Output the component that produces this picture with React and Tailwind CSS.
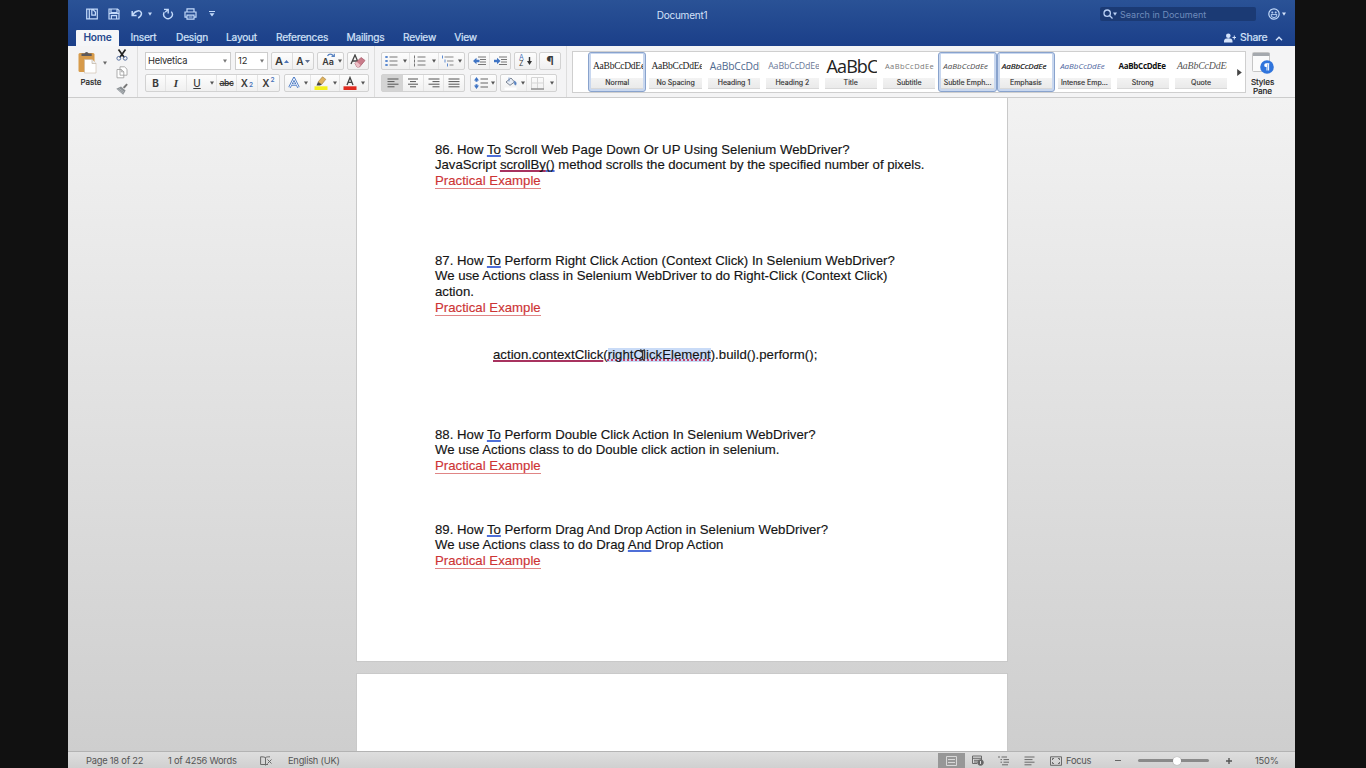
import React from "react";

function Caret({ className = "" }) {
  return (
    <svg viewBox="0 0 4 4" className={"h-1 w-1 shrink-0 " + className}>
      <path d="M0 .4h4L2 3.8z" fill="currentColor" />
    </svg>
  );
}

function Cell({ className = "", children }) {
  return <div className={"flex h-full shrink-0 items-center justify-center " + className}>{children}</div>;
}

function Group({ className = "", children }) {
  return (
    <div
      className={
        "flex h-[18px] shrink-0 items-center rounded-[2px] border border-[#d2d2d2] bg-linear-to-b from-[#fdfdfd] to-[#f0f0f0] text-[#3a3a3a] " +
        className
      }
    >
      {children}
    </div>
  );
}

const quickStroke = { fill: "none", stroke: "#c3dafa", strokeWidth: 1.2 };

function QuickBar() {
  return (
    <div className="flex h-full w-[156px] items-center text-[#c3dafa]">
      <Cell className="w-[23px]">
        <svg viewBox="0 0 12 12" className="h-3 w-3" {...quickStroke}>
          <path d="M.7 1.200h10.600v9.600H.7zM3.300 1.200v9.600M5.800 1.500v5.700h3.600V4L7.200 1.800z" />
        </svg>
      </Cell>
      <Cell className="w-[22px]">
        <svg viewBox="0 0 12 12" className="h-3 w-3" {...quickStroke}>
          <path d="M1 1h8.600L11 2.400V11H1zM3 1v3.600h6V1M3.400 11V7.600h5.200V11" />
          <path d="M1 5.500h10" />
        </svg>
      </Cell>
      <Cell className="w-[23px]">
        <svg viewBox="0 0 12 12" className="h-3 w-3" {...quickStroke} strokeWidth="1.500">
          <path d="M1.200 3v4.400h4.400M1.500 7C4.500 1.800 9.500 2 10.300 4.800 10.900 7 9.200 8.900 7.200 10" />
        </svg>
      </Cell>
      <Caret />
      <Cell className="ml-[6px] w-[20px]">
        <svg viewBox="0 0 12 12" className="h-3 w-3" {...quickStroke} strokeWidth="1.400">
          <path d="M2.300 4.200A4.300 4.300 0 1 0 9.300 3.600M2 1.400h4.200v4.200M6 1.500 3.200 4.200" />
        </svg>
      </Cell>
      <Cell className="w-[24px]">
        <svg viewBox="0 0 13 12" className="h-3 w-[13px]" {...quickStroke}>
          <path d="M3 4V.8h7V4M3 9.200H1V4h11v5.200h-2M3 7.200h7v4H3zM4.500 9h4" />
        </svg>
      </Cell>
      <Cell className="w-[19px]">
        <svg viewBox="0 0 6 6" className="h-[6px] w-[6px]" fill="#c3dafa">
          <path d="M0 0h6v1H0zM.5 2.300h5L3 5.500z" />
        </svg>
      </Cell>
    </div>
  );
}

function TitleBar() {
  return (
    <header className="flex h-[46px] shrink-0 flex-col bg-linear-to-b from-[#2a5296] to-[#1b3f89] text-[#d5e3fa]">
      <div className="flex h-[28px] items-center pl-[12px]">
        <QuickBar />
        <div className="ml-[419px] w-[54px] pt-[2px] text-center text-[10px] tracking-[-0.220px] whitespace-nowrap">Document1</div>
        <div className="ml-[391px] flex h-[14px] w-[156px] items-center rounded-[2px] bg-[#1b3a74] pl-[3px]">
          <svg viewBox="0 0 10 10" className="h-[10px] w-[10px]" fill="none" stroke="#b9d0f5" strokeWidth="1.300">
            <circle cx="4.200" cy="4.200" r="3.200" />
            <path d="m6.500 6.500 3 3" />
          </svg>
          <Caret className="text-[#b9d0f5]" />
          <span className="mt-px ml-[3px] text-[9px] leading-[13px] whitespace-nowrap text-[#6f8cbd]">Search in Document</span>
        </div>
        <svg viewBox="0 0 12 12" className="ml-[12px] h-3 w-3" {...quickStroke}>
          <circle cx="6" cy="6" r="5.200" />
          <circle cx="4.300" cy="4.600" r=".4" />
          <circle cx="7.700" cy="4.600" r=".4" />
          <path d="M3 6.600a3 3 0 0 0 6 0z" strokeWidth=".9" />
        </svg>
        <Caret className="ml-[2px]" />
      </div>
      <div className="h-[2px]" />
      <nav className="flex h-[16px] items-center pl-[8px] text-[10.200px] tracking-[-0.250px] whitespace-nowrap [-webkit-text-stroke:0.200px_currentColor]">
        <div className="flex h-full w-[43px] items-center justify-center rounded-t-[1px] bg-[#f5f6f8] font-semibold text-[#26488c] [-webkit-text-stroke:0px]">Home</div>
        <div className="w-[49px] text-center">Insert</div>
        <div className="w-[48px] text-center">Design</div>
        <div className="w-[51px] text-center">Layout</div>
        <div className="w-[70px] text-center">References</div>
        <div className="w-[57px] text-center">Mailings</div>
        <div className="w-[51px] text-center">Review</div>
        <div className="w-[41px] text-center">View</div>
        <svg viewBox="0 0 12 10" className="ml-[738px] h-[10px] w-3" fill="#d5e3fa">
          <circle cx="4.300" cy="2.700" r="2.300" />
          <path d="M0 9.500V8c0-2 2-2.700 4.300-2.700S8.500 6 8.500 8v1.500zM8.500 4h1.300V2.600h1V4H12v1h-1.200v1.500h-1V5H8.500z" />
        </svg>
        <span className="ml-[4px] w-[26px] text-[10.500px]">Share</span>
        <svg viewBox="0 0 8 5" className="ml-[9px] h-[5px] w-2" fill="none" stroke="#d5e3fa" strokeWidth="1.400">
          <path d="M1 4.300 4 1.300l3 3" />
        </svg>
      </nav>
    </header>
  );
}

function ClipboardGroup() {
  return (
    <div className="flex h-full w-[70px] shrink-0 border-r border-[#dedede]">
      <div className="flex w-[46px] flex-col items-center pt-[5px]">
        <div className="flex w-full items-center pl-[10px]">
          <svg viewBox="0 0 19 23" className="h-[23px] w-[19px]">
            <rect x=".5" y="2" width="16" height="19" rx="1.500" fill="#d79b4b" />
            <path d="M3.500 5V2.500h3a2.200 2.200 0 0 1 4.200 0h3V5z" fill="#5d5a5c" />
            <path d="M6.500 8.500h7.500l4 4V22H6.500z" fill="#fff" stroke="#c9b9a5" strokeWidth=".6" />
            <path d="M14 8.500v4h4" fill="#eee" stroke="#b6a999" strokeWidth=".6" />
          </svg>
          <Caret className="ml-[6px] text-[#666]" />
        </div>
        <div className="mt-[2px] text-[8px] leading-[12px] text-[#222] [-webkit-text-stroke:0.200px_currentColor]">Paste</div>
      </div>
      <div className="flex w-[16px] flex-col items-center pt-[3px]">
        <svg viewBox="0 0 12 12" className="h-3 w-3" fill="none">
          <path d="m2.500.5 5.800 8M9.500.5l-5.800 8" stroke="#222" strokeWidth="1.700" />
          <circle cx="2.800" cy="9.300" r="1.900" stroke="#58709e" />
          <circle cx="9.200" cy="9.300" r="1.900" stroke="#58709e" />
        </svg>
        <svg viewBox="0 0 12 13" className="mt-[5px] h-[13px] w-3" fill="#fff" stroke="#9b9b9b" strokeWidth=".8">
          <path d="M4 .8h4.500L11 3.200v6H4zM1 3.500h4.300l2.500 2.300v6H1zM5.300 3.500v2.300h2.500" />
        </svg>
        <svg viewBox="0 0 12 12" className="mt-[4px] h-3 w-3">
          <path d="m6.800 4.300 3.700-3.800 1.300 1.300L8.500 5.600z" fill="#777" />
          <path d="M.3 5.700 5 3.500l4.600 4-2.400 4.200z" fill="#8c9195" />
          <path d="m1.500 6.200 6 4.200M3 5.500l5.300 3.700" stroke="#b9bec2" strokeWidth=".8" />
        </svg>
      </div>
    </div>
  );
}

function FontGroup() {
  return (
    <div className="flex h-full w-[237px] shrink-0 flex-col gap-[4px] border-r border-[#dedede] pt-[6px] pl-[7px]">
      <div className="flex h-[18px]">
        <div className="flex w-[86px] items-center justify-between border border-[#cdcdcd] bg-white pr-[3px] pl-[2px] text-[9.300px] tracking-[-0.200px] text-[#2c2c2c]">
          Helvetica <Caret className="text-[#777]" />
        </div>
        <div className="ml-[4px] flex w-[33px] items-center justify-between border border-[#cdcdcd] bg-white pr-[3px] pl-[2px] text-[9.300px] text-[#2c2c2c]">
          12 <Caret className="text-[#777]" />
        </div>
        <Group className="ml-[3px] w-[43px]">
          <Cell className="w-[21px] border-r border-[#ddd] text-[11px] font-semibold">
            A<svg viewBox="0 0 5 3" className="ml-px h-[3px] w-[5px]"><path d="M0 3h5L2.500 0z" fill="#4b74b9" /></svg>
          </Cell>
          <Cell className="w-[20px] text-[10px] font-semibold">
            A<svg viewBox="0 0 5 3" className="ml-px h-[3px] w-[5px]"><path d="M0 0h5L2.500 3z" fill="#5c6e90" /></svg>
          </Cell>
        </Group>
        <Group className="ml-[3px] w-[27px]">
          <Cell className="w-[20px]">
            <span className="relative pt-[2px] text-[9px] tracking-[-0.200px] font-semibold">
              Aa
              <svg viewBox="0 0 8 5" className="absolute top-0 left-[5px] h-[5px] w-2" fill="none" stroke="#5580c0" strokeWidth="1.200">
                <path d="M.5 3C1.500.5 5 .5 6.300 3M7.300.8v2.700H4.500" />
              </svg>
            </span>
          </Cell>
          <Caret className="text-[#555]" />
        </Group>
        <Group className="ml-[3px] w-[22px] justify-center">
          <svg viewBox="0 0 16 14" className="h-[14px] w-4">
            <path d="m1 10 4-9 3 7M2.500 7H7" stroke="#444" strokeWidth="1.300" fill="none" />
            <path d="m5 9.500 6-6 4 3-5.500 6.500H7z" fill="#c97b89" stroke="#a95d6c" strokeWidth=".8" />
            <path d="m5 9.500 1.700-1.700L10.500 11 9 13H7z" fill="#edc0c7" />
          </svg>
        </Group>
      </div>
      <div className="flex h-[18px]">
        <Group className="w-[135px] font-semibold">
          <Cell className="w-[20px] border-r border-[#e4e4e4] text-[10px] font-bold">B</Cell>
          <Cell className="w-[21px] border-r border-[#e4e4e4] font-['Liberation_Serif'] text-[11px] font-bold italic">I</Cell>
          <Cell className="w-[20px] text-[10px] font-medium underline">U</Cell>
          <Cell className="w-[10px] border-r border-[#e4e4e4]"><Caret className="text-[#555]" /></Cell>
          <Cell className="w-[20px] border-r border-[#e4e4e4] text-[8.500px] tracking-[-0.300px] line-through">abc</Cell>
          <Cell className="w-[21px] border-r border-[#e4e4e4] text-[10px]">X<span className="mt-[6px] ml-px text-[6.500px] text-[#4b74b9]">2</span></Cell>
          <Cell className="w-[21px] text-[10px]">X<span className="mb-[5px] ml-px text-[6.500px] text-[#4b74b9]">2</span></Cell>
        </Group>
        <Group className="ml-[4px] w-[85px]">
          <Cell className="w-[17px]">
            <svg viewBox="0 0 12 12" className="h-3 w-3" fill="none">
              <path d="m1.500 10.500 4.500-9 4.500 9M3.300 7.800h5.400" stroke="#4f7dc4" strokeWidth="2.600" />
              <path d="m1.500 10.500 4.500-9 4.500 9M3.300 7.800h5.400" stroke="#eef4ff" strokeWidth="1" />
            </svg>
          </Cell>
          <Cell className="w-[9px] border-r border-[#e4e4e4]"><Caret className="text-[#555]" /></Cell>
          <Cell className="w-[20px]">
            <svg viewBox="0 0 14 14" className="h-[14px] w-[14px]">
              <path d="M.5 10.300h13V14H.5z" fill="#f4f01c" />
              <path d="M4 6 8.500.8l3.300 2.500-4 5z" fill="#e0b45f" stroke="#a07b3d" strokeWidth=".6" />
              <path d="m4 6 3.800 2.500L6 9.500H2.500z" fill="#444" />
            </svg>
          </Cell>
          <Cell className="w-[9px] border-r border-[#e4e4e4]"><Caret className="text-[#555]" /></Cell>
          <Cell className="w-[19px]">
            <svg viewBox="0 0 14 14" className="h-[14px] w-[14px]">
              <path d="M.5 10.300h13V14H.5z" fill="#e02b20" />
              <path d="M4 9 7 1.500 10 9M5 6.300h4" stroke="#444" strokeWidth="1.300" fill="none" />
            </svg>
          </Cell>
          <Cell className="w-[8px]"><Caret className="text-[#555]" /></Cell>
        </Group>
      </div>
    </div>
  );
}

function ListIcon({ d }) {
  return (
    <svg viewBox="0 0 13 12" className="h-3 w-[13px]" fill="none">
      <path d={d} stroke="#5c8ad0" strokeWidth="2" />
      <path d="M4.500 2h8M4.500 6h8M4.500 10h8" stroke="#777" strokeWidth="1.100" />
    </svg>
  );
}

function AlignIcon({ d }) {
  return (
    <svg viewBox="0 0 12 10" className="h-[10px] w-3" fill="none" stroke="#555" strokeWidth="1">
      <path d={d} />
    </svg>
  );
}

function IndentIcon({ flip }) {
  return (
    <svg viewBox="0 0 13 10" className="h-[10px] w-[13px]" fill="none">
      <path d="M5 1h8M7 3.500h6M7 6h6M5 8.500h8" stroke="#777" strokeWidth="1" />
      <path d={flip ? "M6.500 5 3 1.800v2H0v2.400h3v2z" : "M0 5l3.500-3.200v2h3v2.400h-3v2z"} fill="#3f74c4" />
    </svg>
  );
}

function ParagraphGroup() {
  return (
    <div className="flex h-full w-[192px] shrink-0 flex-col gap-[4px] border-r border-[#dedede] pt-[6px] pl-[6px]">
      <div className="flex h-[18px]">
        <Group className="w-[84px]">
          <Cell className="w-[18px]"><ListIcon d="M.3 2h2.400M.3 6h2.400M.3 10h2.400" /></Cell>
          <Cell className="w-[10px] border-r border-[#e4e4e4]"><Caret className="text-[#555]" /></Cell>
          <Cell className="w-[19px]">
            <svg viewBox="0 0 13 12" className="h-3 w-[13px]" fill="none">
              <path d="M1.500.5v3M1.500 4.500v3M1.500 8.500v3" stroke="#777" />
              <path d="M4.500 2h8M4.500 6h8M4.500 10h8" stroke="#777" strokeWidth="1.100" />
            </svg>
          </Cell>
          <Cell className="w-[10px] border-r border-[#e4e4e4]"><Caret className="text-[#555]" /></Cell>
          <Cell className="w-[17px]">
            <svg viewBox="0 0 13 12" className="h-3 w-[13px]" fill="none">
              <path d="M1.500.5v3M4 4.500v3M6.500 8.500v3" stroke="#5c8ad0" />
              <path d="M3.500 2h9M6 6h6.500M8.500 10h4" stroke="#888" strokeWidth="1.100" />
            </svg>
          </Cell>
          <Caret className="ml-[2px] text-[#555]" />
        </Group>
        <Group className="ml-[3px] w-[43px]">
          <Cell className="w-[21px] border-r border-[#e4e4e4]"><IndentIcon /></Cell>
          <Cell className="w-[20px]"><IndentIcon flip /></Cell>
        </Group>
        <Group className="ml-[3px] w-[23px] justify-center">
          <div className="flex flex-col text-[7px] leading-[6.500px]"><span className="text-[#4b74b9]">A</span><span>Z</span></div>
          <svg viewBox="0 0 5 8" className="ml-[3px] h-2 w-[5px]"><path d="M1.800 0h1.400v4H5L2.500 8 0 4h1.800z" fill="#333" /></svg>
        </Group>
        <Group className="ml-[2px] w-[22px] justify-center text-[12px] font-bold">¶</Group>
      </div>
      <div className="flex h-[18px]">
        <Group className="w-[84px]">
          <Cell className="w-[21px] bg-[#d4d4d4]"><AlignIcon d="M.5 1h11M.5 3.600h7M.5 6.200h11M.5 8.800h7" /></Cell>
          <Cell className="w-[21px] border-r border-[#e4e4e4]"><AlignIcon d="M1 1h10M3 3.600h6M1 6.200h10M3 8.800h6" /></Cell>
          <Cell className="w-[20px] border-r border-[#e4e4e4]"><AlignIcon d="M.5 1h11M4.500 3.600h7M.5 6.200h11M4.500 8.800h7" /></Cell>
          <Cell className="w-[20px]"><AlignIcon d="M.5 1h11M.5 3.600h11M.5 6.200h11M.5 8.800h11" /></Cell>
        </Group>
        <Group className="ml-[5px] w-[27px]">
          <Cell className="w-[20px]">
            <svg viewBox="0 0 14 12" className="h-3 w-[14px]" fill="none">
              <path d="M2.500 0 5 3.500H3.500v1.200h-2V3.500H0zM2.500 12 5 8.500H3.500V7.300h-2v1.200H0z" fill="#3f74c4" />
              <path d="M6.500 2H14M6.500 6H14M6.500 10H14" stroke="#666" strokeWidth="1.200" />
            </svg>
          </Cell>
          <Caret className="text-[#555]" />
        </Group>
        <Group className="ml-[3px] w-[57px]">
          <Cell className="w-[18px]">
            <svg viewBox="0 0 13 13" className="h-[13px] w-[13px]">
              <path d="m2 5 5-4 3.500 4L6 8.300z" fill="#e9eef6" stroke="#6d7889" strokeWidth=".9" />
              <path d="M5 .5v4M10.500 4c2 1 2 3 1 4.200C10.500 7.500 10 6 10.500 4z" stroke="#5580c0" fill="#5580c0" strokeWidth=".7" />
              <path d="M.5 10.500h12V13H.5z" fill="#fff" />
            </svg>
          </Cell>
          <Cell className="w-[8px] border-r border-[#e4e4e4]"><Caret className="text-[#555]" /></Cell>
          <Cell className="w-[20px]">
            <svg viewBox="0 0 13 13" className="h-[13px] w-[13px]" fill="none">
              <path d="M.5.5h12v11M.5.5v11M6.500.5v11M.5 6h12" stroke="#d5d5d5" />
              <path d="M0 12h13" stroke="#777" strokeWidth="1.200" />
            </svg>
          </Cell>
          <Cell className="w-[9px]"><Caret className="text-[#555]" /></Cell>
        </Group>
      </div>
    </div>
  );
}

const styleTiles = [
  { name: "Normal", on: true, sample: "AaBbCcDdEe", cls: "font-['Liberation_Serif'] text-[9.500px] tracking-[-0.250px] text-[#222]" },
  { name: "No Spacing", sample: "AaBbCcDdEe", cls: "font-['Liberation_Serif'] text-[9.500px] tracking-[-0.250px] text-[#222]" },
  { name: "Heading 1", sample: "AaBbCcDdEe", cls: "font-['Open_Sans'] text-[10.300px] tracking-[-0.150px] text-[#50698f]" },
  { name: "Heading 2", sample: "AaBbCcDdEe", cls: "font-['Open_Sans'] text-[8.800px] tracking-[-0.120px] text-[#6b7897]" },
  { name: "Title", sample: "AaBbCc", cls: "font-['Open_Sans'] text-[18px] tracking-[-0.900px] text-[#222]" },
  { name: "Subtitle", sample: "AaBbCcDdEe", cls: "font-['Open_Sans'] text-[7.500px] tracking-[0.420px] text-[#777]" },
  { name: "Subtle Emph...", on: true, sample: "AaBbCcDdEe", cls: "font-['Open_Sans'] text-[8px] tracking-[-0.020px] italic text-[#4a4a4a]" },
  { name: "Emphasis", on: true, sample: "AaBbCcDdEe", cls: "font-['Open_Sans'] text-[8px] tracking-[-0.020px] italic text-[#111] [-webkit-text-stroke:0.200px_currentColor]" },
  { name: "Intense Emp...", sample: "AaBbCcDdEe", cls: "font-['Open_Sans'] text-[8px] tracking-[-0.020px] italic text-[#4e66a0]" },
  { name: "Strong", sample: "AaBbCcDdEe", cls: "font-['Open_Sans'] text-[8px] tracking-[-0.300px] font-bold text-[#111]" },
  { name: "Quote", sample: "AaBbCcDdEe", cls: "font-['Liberation_Serif'] text-[9.800px] tracking-[-0.120px] italic text-[#555]" },
];

function StyleGallery() {
  return (
    <div className="mt-[5px] ml-[5px] flex h-[42px] w-[674px] shrink-0 border border-[#cfcfcf] bg-white pl-[15px]">
      {styleTiles.map((s) => (
        <div
          key={s.name}
          className={
            "flex w-[58.400px] shrink-0 flex-col rounded-[3px] px-[2px] pt-[1px] " +
            (s.on ? "border-[1.500px] border-[#89a3cd] bg-[#c8d7ef]" : "border-[1.500px] border-transparent")
          }
        >
          <div className="flex h-[24px] items-center justify-start overflow-hidden bg-white pl-[2px] leading-[24px] whitespace-nowrap">
            <span className={s.cls}>{s.sample}</span>
          </div>
          <div className="flex h-[11px] items-center justify-center border-b border-[#d8d8d8] bg-linear-to-b from-[#f3f3f3] to-[#eaeaea] text-[7px] leading-[10px] whitespace-nowrap text-[#333] [-webkit-text-stroke:0.150px_currentColor]">
            {s.name}
          </div>
        </div>
      ))}
      <Cell className="ml-[5px] w-[8px]">
        <svg viewBox="0 0 4 6" className="h-[7px] w-[5px]"><path d="M0 0v6l4-3z" fill="#444" /></svg>
      </Cell>
    </div>
  );
}

function Ribbon() {
  return (
    <div className="flex h-[52px] shrink-0 border-b border-[#cccccc] bg-[#f4f4f5]">
      <ClipboardGroup />
      <FontGroup />
      <ParagraphGroup />
      <StyleGallery />
      <div className="flex w-[33px] flex-col items-center pt-[6px] text-[8.200px] leading-[9px] tracking-[-0.100px] text-[#222] [-webkit-text-stroke:0.200px_currentColor]">
        <svg viewBox="0 0 22 23" className="ml-px h-[23px] w-[22px]">
          <rect x=".5" y=".5" width="17" height="19" rx="1" fill="#fbfbfb" stroke="#c5c5c5" />
          <path d="M1 1h16.500v3H1z" fill="#a5a9ae" />
          <circle cx="15" cy="15" r="6.800" fill="#2f74dc" />
          <path d="M17.300 11.300h-3.200a1.900 1.900 0 0 0 0 3.800h.4v3.500h1v-6.300h.6v6.300h1v-6.300h.2z" fill="#fff" />
        </svg>
        <div className="mt-[3px]">Styles</div>
        <div>Pane</div>
      </div>
    </div>
  );
}

function Grammar({ children }) {
  return (
    <span className="underline decoration-[#4f6fd8] decoration-[1.500px] underline-offset-[1px] [text-decoration-skip-ink:none]">
      {children}
    </span>
  );
}

function Spelled({ children }) {
  return (
    <span className="underline decoration-[#a8325f] decoration-[1.500px] underline-offset-[1px] [text-decoration-skip-ink:none]">
      {children}
    </span>
  );
}

function Practical() {
  return (
    <p className="text-[#cd3435]">
      <span className="border-b border-[#e08585]">Practical Example</span>
    </p>
  );
}

function Workspace() {
  return (
    <main className="flex h-[653px] shrink-0 flex-col items-center gap-[11px] overflow-hidden bg-linear-to-b from-[#f2f2f2] via-[#e0e0e0] to-[#cecece] pl-px">
      <article className="h-[564px] w-[652px] shrink-0 border-x border-b border-[#c9c9c9] bg-white pt-[43.500px] pl-[78px] font-['Liberation_Sans',sans-serif] text-[13.200px] leading-[15.800px] tracking-[0.010px] whitespace-nowrap text-[#141414] [-webkit-text-stroke:0.150px_currentColor]">
        <section className="h-[111px]">
          <p>86. How <Grammar>To</Grammar> Scroll Web Page Down Or UP Using Selenium WebDriver?</p>
          <p className="tracking-[-0.030px]">JavaScript <Spelled>scrollBy</Spelled><Grammar>()</Grammar> method scrolls the document by the specified number of pixels.</p>
          <Practical />
        </section>
        <section className="h-[174px]">
          <p>87. How <Grammar>To</Grammar> Perform Right Click Action (Context Click) In Selenium WebDriver?</p>
          <p className="tracking-[-0.010px]">We use Actions class in Selenium WebDriver to do Right-Click (Context Click)</p>
          <p>action.</p>
          <Practical />
          <p className="mt-[31px] pl-[58px] tracking-[0.020px]">
            <Spelled>action.contextClick</Spelled>(
            <span className="relative inline-block h-[14px] bg-[#c9dbf7] leading-[14px] underline decoration-[#c2426e] decoration-dotted decoration-[1.500px] underline-offset-[1px] [text-decoration-skip-ink:none]">
              rightClickElement
              <svg viewBox="0 0 7 12" className="absolute top-[1px] left-[31px] h-3 w-[7px]" fill="none" stroke="#333" strokeWidth="1.200">
                <path d="M1 .8q2 0 2.500 1.200Q4 .8 6 .8M3.500 2v8M1 11.200q2 0 2.500-1.200.5 1.200 2.500 1.200" />
              </svg>
            </span>
            ).build().perform();
          </p>
        </section>
        <section className="h-[95px]">
          <p>88. How <Grammar>To</Grammar> Perform Double Click Action In Selenium WebDriver?</p>
          <p className="tracking-[-0.010px]">We use Actions class to do Double click action in selenium.</p>
          <Practical />
        </section>
        <section>
          <p>89. How <Grammar>To</Grammar> Perform Drag And Drop Action in Selenium WebDriver?</p>
          <p>We use Actions class to do Drag <Grammar>And</Grammar> Drop Action</p>
          <Practical />
        </section>
      </article>
      <article className="h-[90px] w-[652px] shrink-0 border border-[#c9c9c9] bg-white" />
    </main>
  );
}

const st = { fill: "none", stroke: "#6a6a6a", strokeWidth: 1 };

function StatusBar() {
  return (
    <footer className="flex h-[17px] shrink-0 items-center border-t border-[#b3b3b3] bg-linear-to-b from-[#dedede] to-[#d0d0d0] pt-px pl-[18px] text-[9.300px] tracking-[-0.220px] whitespace-nowrap text-[#555]">
      <span className="w-[82px]">Page 18 of 22</span>
      <span className="w-[92px]">1 of 4256 Words</span>
      <svg viewBox="0 0 12 10" className="h-[10px] w-3" {...st}>
        <path d="M5.500 1.500v8M5.500 1.500C4 .8 2.500.8.600.8V8.500h4.900M5.500 1.500C7 .8 8 .8 10 .8M5.500 8.500H8M7.500 3.500l4 4M11.500 3.500l-4 4" />
      </svg>
      <span className="ml-[16px] w-[52px]">English (UK)</span>
      <div className="ml-[598px] flex h-full w-[27px] items-center justify-center bg-[#979797]">
        <svg viewBox="0 0 11 10" className="h-[10px] w-[11px]" fill="none" stroke="#d8d8d8">
          <path d="M.5.5h10v9H.5zM2 3.500h7M2 6.500h7" />
        </svg>
      </div>
      <svg viewBox="0 0 12 11" className="ml-[7px] h-[11px] w-3" {...st}>
        <path d="M.5 1h9v4M.5 1v7.500H5M.5 3.300h9M2 5.300h5M2 7h3" />
        <circle cx="8.500" cy="7.500" r="2.800" fill="#666" />
        <path d="M8.500 6v3" stroke="#ddd" />
      </svg>
      <svg viewBox="0 0 12 10" className="ml-[14px] h-[10px] w-3" {...st}>
        <path d="M0 1h2M3.500 1H9M2.500 3.600h1.500M5.500 3.600h5.500M2.500 6.200h1.500M5.500 6.200h5.500M4 8.800h6" />
      </svg>
      <svg viewBox="0 0 11 10" className="ml-[14px] h-[10px] w-[11px]" {...st}>
        <path d="M.5 1h10M.5 3.600h8M.5 6.200h10M.5 8.800h7" />
      </svg>
      <svg viewBox="0 0 12 10" className="ml-[15px] h-[10px] w-3" {...st}>
        <path d="M.5.8h11v8.500H.5z" />
        <path d="M2.500 4V2.500H4M8 2.500h1.500V4M9.500 6v1.500H8M4 7.500H2.500V6" />
      </svg>
      <span className="ml-[4px] w-[26px]">Focus</span>
      <div className="ml-[23px] h-[1.500px] w-[6px] bg-[#666]" />
      <div className="ml-[17px] flex h-[3px] w-[71px] items-center justify-center rounded-full bg-[#8a8a8a] pl-[6px]">
        <div className="h-2 w-2 shrink-0 rounded-full bg-white shadow-[0_0_1px_#777]" />
      </div>
      <svg viewBox="0 0 6 6" className="ml-[17px] h-[6px] w-[6px]" stroke="#555" strokeWidth="1.400"><path d="M0 3h6M3 0v6" /></svg>
      <span className="ml-[23px]">150%</span>
    </footer>
  );
}

export default function App() {
  return (
    <div className="flex h-[768px] w-[1366px] justify-start overflow-hidden bg-[#111111] pl-[68px] font-['Inter',sans-serif]">
      <div className="flex w-[1227px] flex-col overflow-hidden">
        <TitleBar />
        <Ribbon />
        <Workspace />
        <StatusBar />
      </div>
    </div>
  );
}
